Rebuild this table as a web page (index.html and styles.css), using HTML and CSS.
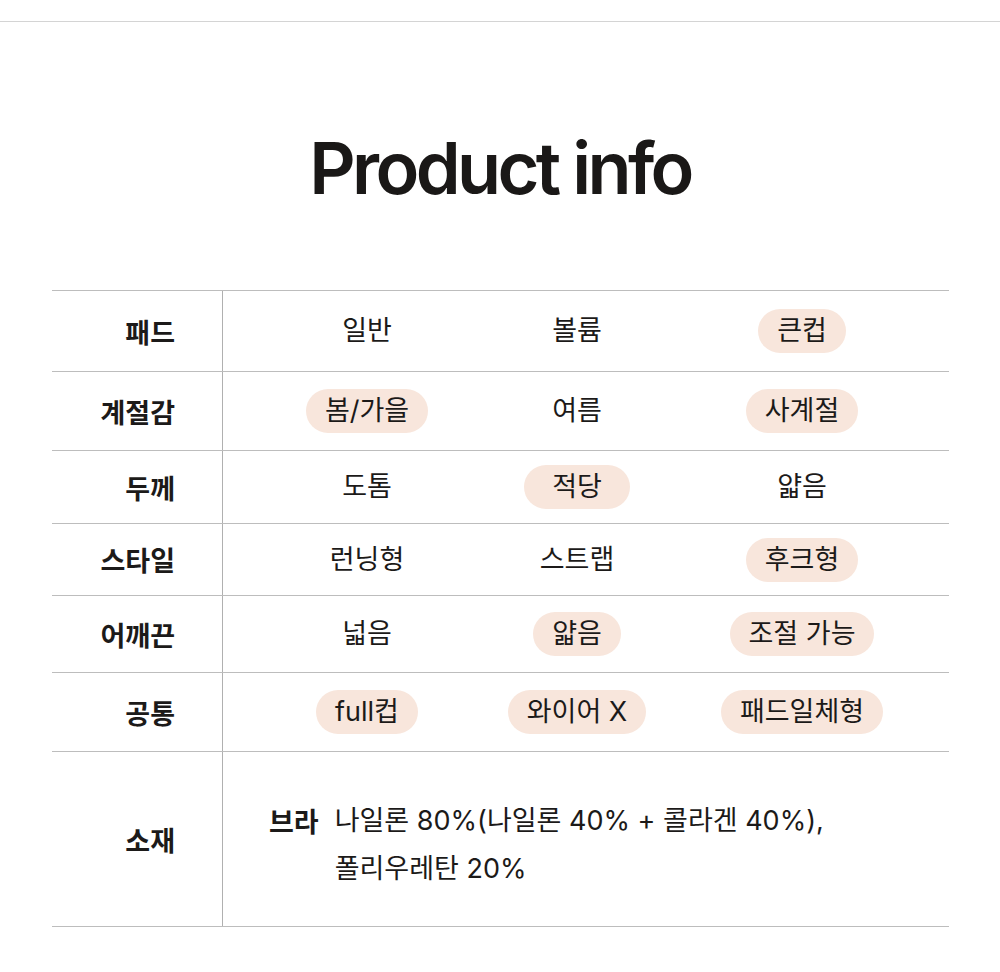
FILE: index.html
```html
<!DOCTYPE html>
<html lang="ko">
<head>
<meta charset="utf-8">
<title>Product info</title>
<link rel="stylesheet" href="styles.css">
</head>
<body>
<div class="topline"></div>
<h1 class="title">Product info</h1>
<div class="table">
  <div class="row r1">
    <div class="label">패드</div>
    <div class="values">
      <span class="val">일반</span>
      <span class="val">볼륨</span>
      <span class="val pill">큰컵</span>
    </div>
  </div>
  <div class="row r2">
    <div class="label">계절감</div>
    <div class="values">
      <span class="val pill">봄/가을</span>
      <span class="val">여름</span>
      <span class="val pill">사계절</span>
    </div>
  </div>
  <div class="row r3">
    <div class="label">두께</div>
    <div class="values">
      <span class="val">도톰</span>
      <span class="val pill pill-wide">적당</span>
      <span class="val">얇음</span>
    </div>
  </div>
  <div class="row r4">
    <div class="label">스타일</div>
    <div class="values">
      <span class="val">런닝형</span>
      <span class="val">스트랩</span>
      <span class="val pill">후크형</span>
    </div>
  </div>
  <div class="row r5">
    <div class="label">어깨끈</div>
    <div class="values">
      <span class="val">넓음</span>
      <span class="val pill">얇음</span>
      <span class="val pill">조절 가능</span>
    </div>
  </div>
  <div class="row r6">
    <div class="label">공통</div>
    <div class="values">
      <span class="val pill">full컵</span>
      <span class="val pill">와이어 X</span>
      <span class="val pill">패드일체형</span>
    </div>
  </div>
  <div class="row r7">
    <div class="label">소재</div>
    <div class="material">
      <span class="mat-key">브라</span>
      <div class="mat-text">
        <div>나일론 80%(나일론 40% + 콜라겐 40%),</div>
        <div>폴리우레탄 20%</div>
      </div>
    </div>
  </div>
</div>
</body>
</html>
```

FILE: styles.css
```css
html, body {
  margin: 0;
  padding: 0;
  background: #ffffff;
}
body {
  font-family: Inter, "Noto Sans CJK KR", sans-serif;
  color: #1c1a19;
}
.topline {
  height: 21px;
  border-bottom: 1px solid #d4d4d4;
}
.title {
  margin: 107px 0 0 0;
  font-size: 72px;
  line-height: 78px;
  font-weight: 600;
  letter-spacing: -0.05em;
  text-align: center;
  color: #1a1817;
}
.table {
  margin: 83px 51px 0 52px;
  border-top: 1px solid #bdbdbd;
}
.row {
  display: grid;
  grid-template-columns: 171px 1fr;
  border-bottom: 1px solid #bdbdbd;
  box-sizing: border-box;
}
.r1 { height: 81px; }
.r2 { height: 79px; }
.r3 { height: 73px; }
.r4 { height: 72px; }
.r5 { height: 77px; }
.r6 { height: 79px; }
.r7 { height: 175px; }
.label {
  display: flex;
  align-items: center;
  justify-content: flex-end;
  padding-right: 47px;
  border-right: 1px solid #b0b0b0;
  font-family: "Noto Sans CJK KR", sans-serif;
  font-size: 27px;
  font-weight: 700;
  color: #1c1a19;
}
.values {
  display: grid;
  grid-template-columns: 210px 210px 240px;
  padding-left: 39px;
  justify-items: center;
  align-items: center;
  font-size: 27px;
}
.val {
  display: inline-flex;
  align-items: center;
  height: 44px;
  line-height: 44px;
  white-space: nowrap;
  color: #1c1a19;
}
.pill {
  background: #f8e6dc;
  border-radius: 22px;
  padding: 0 19px;
}
.pill-wide {
  padding: 0 28px;
}
.material {
  display: flex;
  align-items: center;
  padding-left: 46px;
  padding-top: 11px;
  font-size: 27px;
  line-height: 48px;
}
.mat-key {
  font-family: "Noto Sans CJK KR", sans-serif;
  font-weight: 700;
  margin-top: -48px;
}
.mat-text {
  margin-left: 16px;
  color: #1c1a19;
}
```
